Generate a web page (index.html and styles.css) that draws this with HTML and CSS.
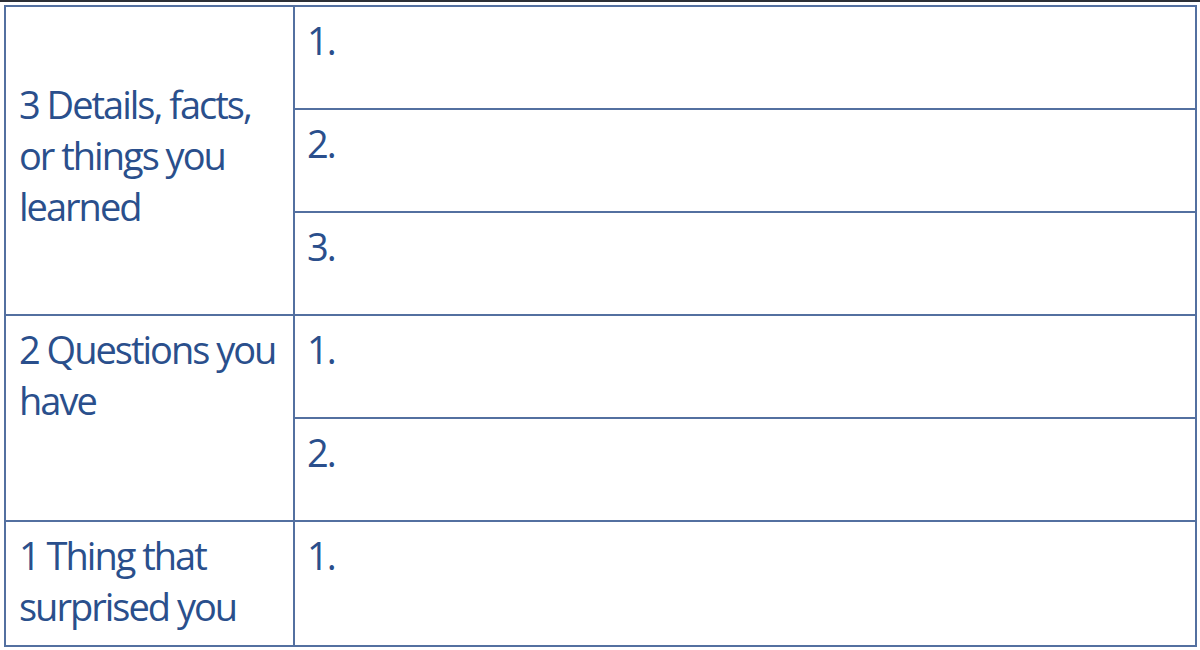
FILE: index.html
```html
<!DOCTYPE html>
<html>
<head>
<meta charset="utf-8">
<link rel="stylesheet" href="styles.css">
</head>
<body>
<div class="topline"></div>
<table class="sheet">
  <tr class="sub">
    <td class="label mid" rowspan="3">3 Details, facts, or things you learned</td>
    <td class="num">1.</td>
  </tr>
  <tr class="sub"><td class="num">2.</td></tr>
  <tr class="sub"><td class="num">3.</td></tr>
  <tr class="sub">
    <td class="label" rowspan="2">2 Questions you have</td>
    <td class="num">1.</td>
  </tr>
  <tr class="sub"><td class="num">2.</td></tr>
  <tr class="last">
    <td class="label">1 Thing that surprised you</td>
    <td class="num">1.</td>
  </tr>
</table>
</body>
</html>
```
FILE: styles.css
```css
html, body {
  margin: 0;
  padding: 0;
  background: #ffffff;
}
body {
  width: 1200px;
  height: 650px;
  overflow: hidden;
  font-family: "Open Sans", "Liberation Sans", sans-serif;
  font-stretch: 90%;
  font-weight: 400;
  color: #2a4f8c;
}
.topline {
  height: 2px;
  background: #2b2f36;
}
.sheet {
  margin: 3px 0 0 4px;
  width: 1193px;
  border-collapse: collapse;
  table-layout: fixed;
  border: 2px solid #5370a0;
}
.sheet td {
  border: 2px solid #5370a0;
  padding: 8px 12px 0 12px;
  font-size: 38px;
  line-height: 51px;
  letter-spacing: -2px;
  vertical-align: top;
}
.sheet .label {
  width: 262px;
  padding-left: 13px;
}
.sheet .label.mid {
  vertical-align: middle;
  padding-top: 0;
  padding-bottom: 10px;
}
.sheet .num {
  padding-left: 12px;
}
.sub {
  height: 103px;
}
.last {
  height: 125px;
}
```
